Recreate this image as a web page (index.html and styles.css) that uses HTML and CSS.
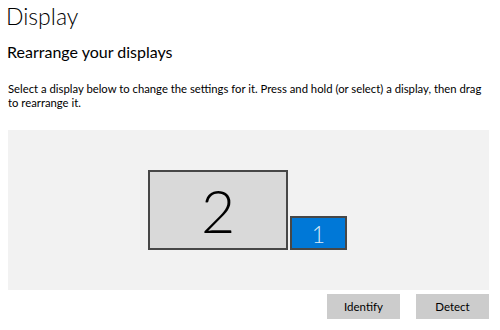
FILE: index.html
```html
<!DOCTYPE html>
<html lang="en">

<head>
    <meta charset="UTF-8">
    <title>Display</title>
    <link rel="stylesheet" href="styles.css">
</head>

<body>
    <div class="page">
        <h1 class="page-title">Display</h1>
        <h2 class="section-title">Rearrange your displays</h2>
        <p class="hint">Select a display below to change the settings for it. Press and hold (or select) a display, then drag to rearrange it.</p>

        <div class="arrange-area">
            <div class="monitors">
                <div class="monitor monitor-big">2</div>
                <div class="monitor monitor-small selected">1</div>
            </div>
        </div>

        <div class="actions">
            <button class="btn">Identify</button>
            <button class="btn">Detect</button>
        </div>
    </div>
</body>

</html>
```

FILE: styles.css
```css
body {
    margin: 0;
    padding: 0;
    background-color: #fff;
    font-family: Lato, "Open Sans", sans-serif;
    color: #000;
}

.page {
    padding: 0 11px 0 8px;
}

.page-title {
    margin: 0;
    padding-top: 1px;
    margin-left: -2px;
    font-size: 23px;
    font-weight: 300;
    line-height: 30px;
}

.section-title {
    margin: 0;
    margin-top: 11px;
    margin-left: -1px;
    font-size: 16px;
    font-weight: 400;
    line-height: 20px;
}

.hint {
    margin: 0;
    margin-top: 20px;
    font-size: 11.3px;
    line-height: 14px;
}

.arrange-area {
    margin-top: 20px;
    height: 160px;
    background-color: #f2f2f2;
    display: flex;
    justify-content: center;
    align-items: center;
}

.monitors {
    display: flex;
    align-items: flex-end;
    gap: 2px;
    margin-right: 2px;
}

.monitor {
    box-sizing: border-box;
    border: 2px solid #474747;
    display: flex;
    align-items: center;
    justify-content: center;
    font-weight: 300;
}

.monitor-big {
    width: 140px;
    height: 80px;
    background-color: #d9d9d9;
    font-size: 59px;
}

.monitor-small {
    width: 57px;
    height: 34px;
    font-size: 23px;
}

.monitor.selected {
    background-color: #0078d7;
    color: #dcebf8;
    padding-top: 2px;
}

.actions {
    display: flex;
    justify-content: flex-end;
    gap: 16px;
    margin-top: 4px;
}

.btn {
    width: 73px;
    height: 25px;
    border: none;
    background-color: #cccccc;
    font-family: Lato, "Open Sans", sans-serif;
    font-size: 11.5px;
    color: #000;
    padding: 0;
}
```
